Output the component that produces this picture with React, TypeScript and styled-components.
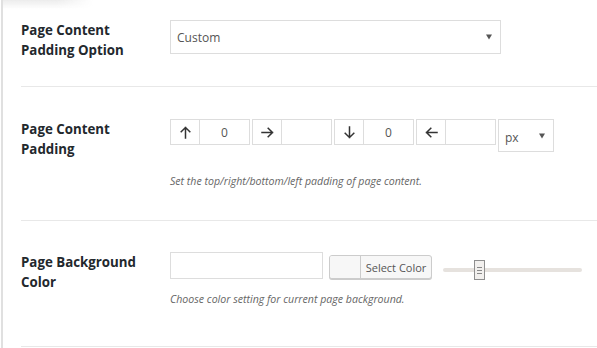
import React from "react";
import styled, { createGlobalStyle } from "styled-components";

const Global = createGlobalStyle`
  html, body { margin: 0; padding: 0; background: #fff; }
  body { font-family: "Open Sans", "Noto Sans", sans-serif; color: #23282d; }
  * { box-sizing: border-box; }
`;

const Page = styled.div`
  position: relative;
  width: 597px;
  height: 348px;
  overflow: hidden;
  margin-left: 1px;
  border-left: 2px solid #e0e0e0;
  padding-left: 18px;
  &::before {
    content: "";
    position: absolute;
    left: 0;
    top: 0;
    width: 90px;
    height: 9px;
    background: linear-gradient(to bottom, #ececec, rgba(255,255,255,0));
    -webkit-mask-image: linear-gradient(to right, #000 60%, transparent);
    mask-image: linear-gradient(to right, #000 60%, transparent);
  }
`;

const Row = styled.div<{ $top: number; $bottom: number }>`
  display: grid;
  grid-template-columns: 149px 1fr;
  align-items: start;
  padding: ${(p) => p.$top}px 0 ${(p) => p.$bottom}px 0;
  border-bottom: 1px solid #e8e8e8;
`;

const Label = styled.div`
  font-weight: 700;
  font-size: 13.3px;
  line-height: 20px;
  color: #23282d;
`;

const Field = styled.div`
  display: flex;
  flex-direction: column;
`;

const Controls = styled.div`
  display: flex;
  align-items: flex-start;
  gap: 2px;
`;

const SelectBox = styled.div<{ $w: number; $h: number }>`
  width: ${(p) => p.$w}px;
  height: ${(p) => p.$h}px;
  border: 1px solid #dddddd;
  background: #fff;
  display: flex;
  align-items: center;
  justify-content: space-between;
  padding: 0 8px 0 6px;
  font-size: 12px;
  color: #555;
`;

const Caret = () => (
  <svg width="6" height="6" viewBox="0 0 6 6">
    <path d="M0 0.5 H6 L3 5.5 Z" fill="#555" />
  </svg>
);

const Group = styled.div`
  display: flex;
  width: 80px;
  height: 26px;
  border: 1px solid #dddddd;
`;

const Addon = styled.div`
  width: 29px;
  border-right: 1px solid #dddddd;
  display: flex;
  align-items: center;
  justify-content: center;
  color: #333;
`;

const NumInput = styled.div`
  flex: 1;
  display: flex;
  align-items: center;
  justify-content: center;
  font-size: 12px;
  color: #555;
`;

const Desc = styled.div<{ $mt: number }>`
  margin-top: ${(p) => p.$mt}px;
  font-size: 10.6px;
  font-style: italic;
  color: #666;
  line-height: 14px;
`;

const TextInput = styled.div`
  width: 153px;
  height: 27px;
  border: 1px solid #dddddd;
  background: #fff;
`;

const ColorButton = styled.div`
  margin-left: 4px;
  margin-top: 3px;
  height: 24px;
  width: 103px;
  display: flex;
  border: 1px solid #cccccc;
  border-radius: 3px;
  background: #f7f7f7;
  box-shadow: 0 1px 0 #cccccc;
  overflow: hidden;
`;

const Swatch = styled.div`
  width: 31px;
  border-right: 1px solid #cccccc;
  background: #f7f7f7;
`;

const ButtonText = styled.div`
  flex: 1;
  display: flex;
  align-items: center;
  justify-content: center;
  font-size: 11px;
  color: #555;
`;

const Slider = styled.div`
  position: relative;
  margin-left: 9px;
  margin-top: 16px;
  width: 139px;
  height: 4px;
  background: #e6e2de;
  border-radius: 2px;
`;

const Handle = styled.div`
  position: absolute;
  left: 31px;
  top: -8px;
  width: 11px;
  height: 20px;
  border: 1px solid #8f8f8f;
  background: #f2f0ee;
  display: flex;
  flex-direction: column;
  align-items: center;
  justify-content: center;
  gap: 2px;
`;

const Grip = styled.div`
  width: 5px;
  height: 1px;
  background: #888;
`;

const Arrow = ({ rot }: { rot: number }) => (
  <svg width="13" height="13" viewBox="0 0 13 13" style={{ transform: `rotate(${rot}deg)` }}>
    <path
      d="M6.5 12 V1.5 M2.2 5.8 L6.5 1.5 L10.8 5.8"
      fill="none"
      stroke="#333"
      strokeWidth="1.5"
      strokeLinecap="square"
    />
  </svg>
);

const arrows = [
  { r: 0, v: "0" },
  { r: 90, v: "" },
  { r: 180, v: "0" },
  { r: 270, v: "" },
];

export default function App() {
  return (
    <>
      <Global />
      <Page>
        <Row $top={20} $bottom={26}>
          <Label>
            Page Content
            <br />
            Padding Option
          </Label>
          <Field>
            <SelectBox $w={331} $h={34}>
              <span>Custom</span>
              <Caret />
            </SelectBox>
          </Field>
        </Row>
        <Row $top={32} $bottom={32}>
          <Label>
            Page Content
            <br />
            Padding
          </Label>
          <Field>
            <Controls>
              {arrows.map((x, i) => (
                <Group key={i}>
                  <Addon>
                    <Arrow rot={x.r} />
                  </Addon>
                  <NumInput>{x.v}</NumInput>
                </Group>
              ))}
              <SelectBox $w={56} $h={33}>
                <span style={{ paddingTop: 4 }}>px</span>
                <Caret />
              </SelectBox>
            </Controls>
            <Desc $mt={22}>Set the top/right/bottom/left padding of page content.</Desc>
          </Field>
        </Row>
        <Row $top={31} $bottom={40}>
          <Label>
            Page Background
            <br />
            Color
          </Label>
          <Field>
            <Controls>
              <TextInput />
              <ColorButton>
                <Swatch />
                <ButtonText>Select Color</ButtonText>
              </ColorButton>
              <Slider>
                <Handle>
                  <Grip />
                  <Grip />
                  <Grip />
                </Handle>
              </Slider>
            </Controls>
            <Desc $mt={13}>Choose color setting for current page background.</Desc>
          </Field>
        </Row>
      </Page>
    </>
  );
}
